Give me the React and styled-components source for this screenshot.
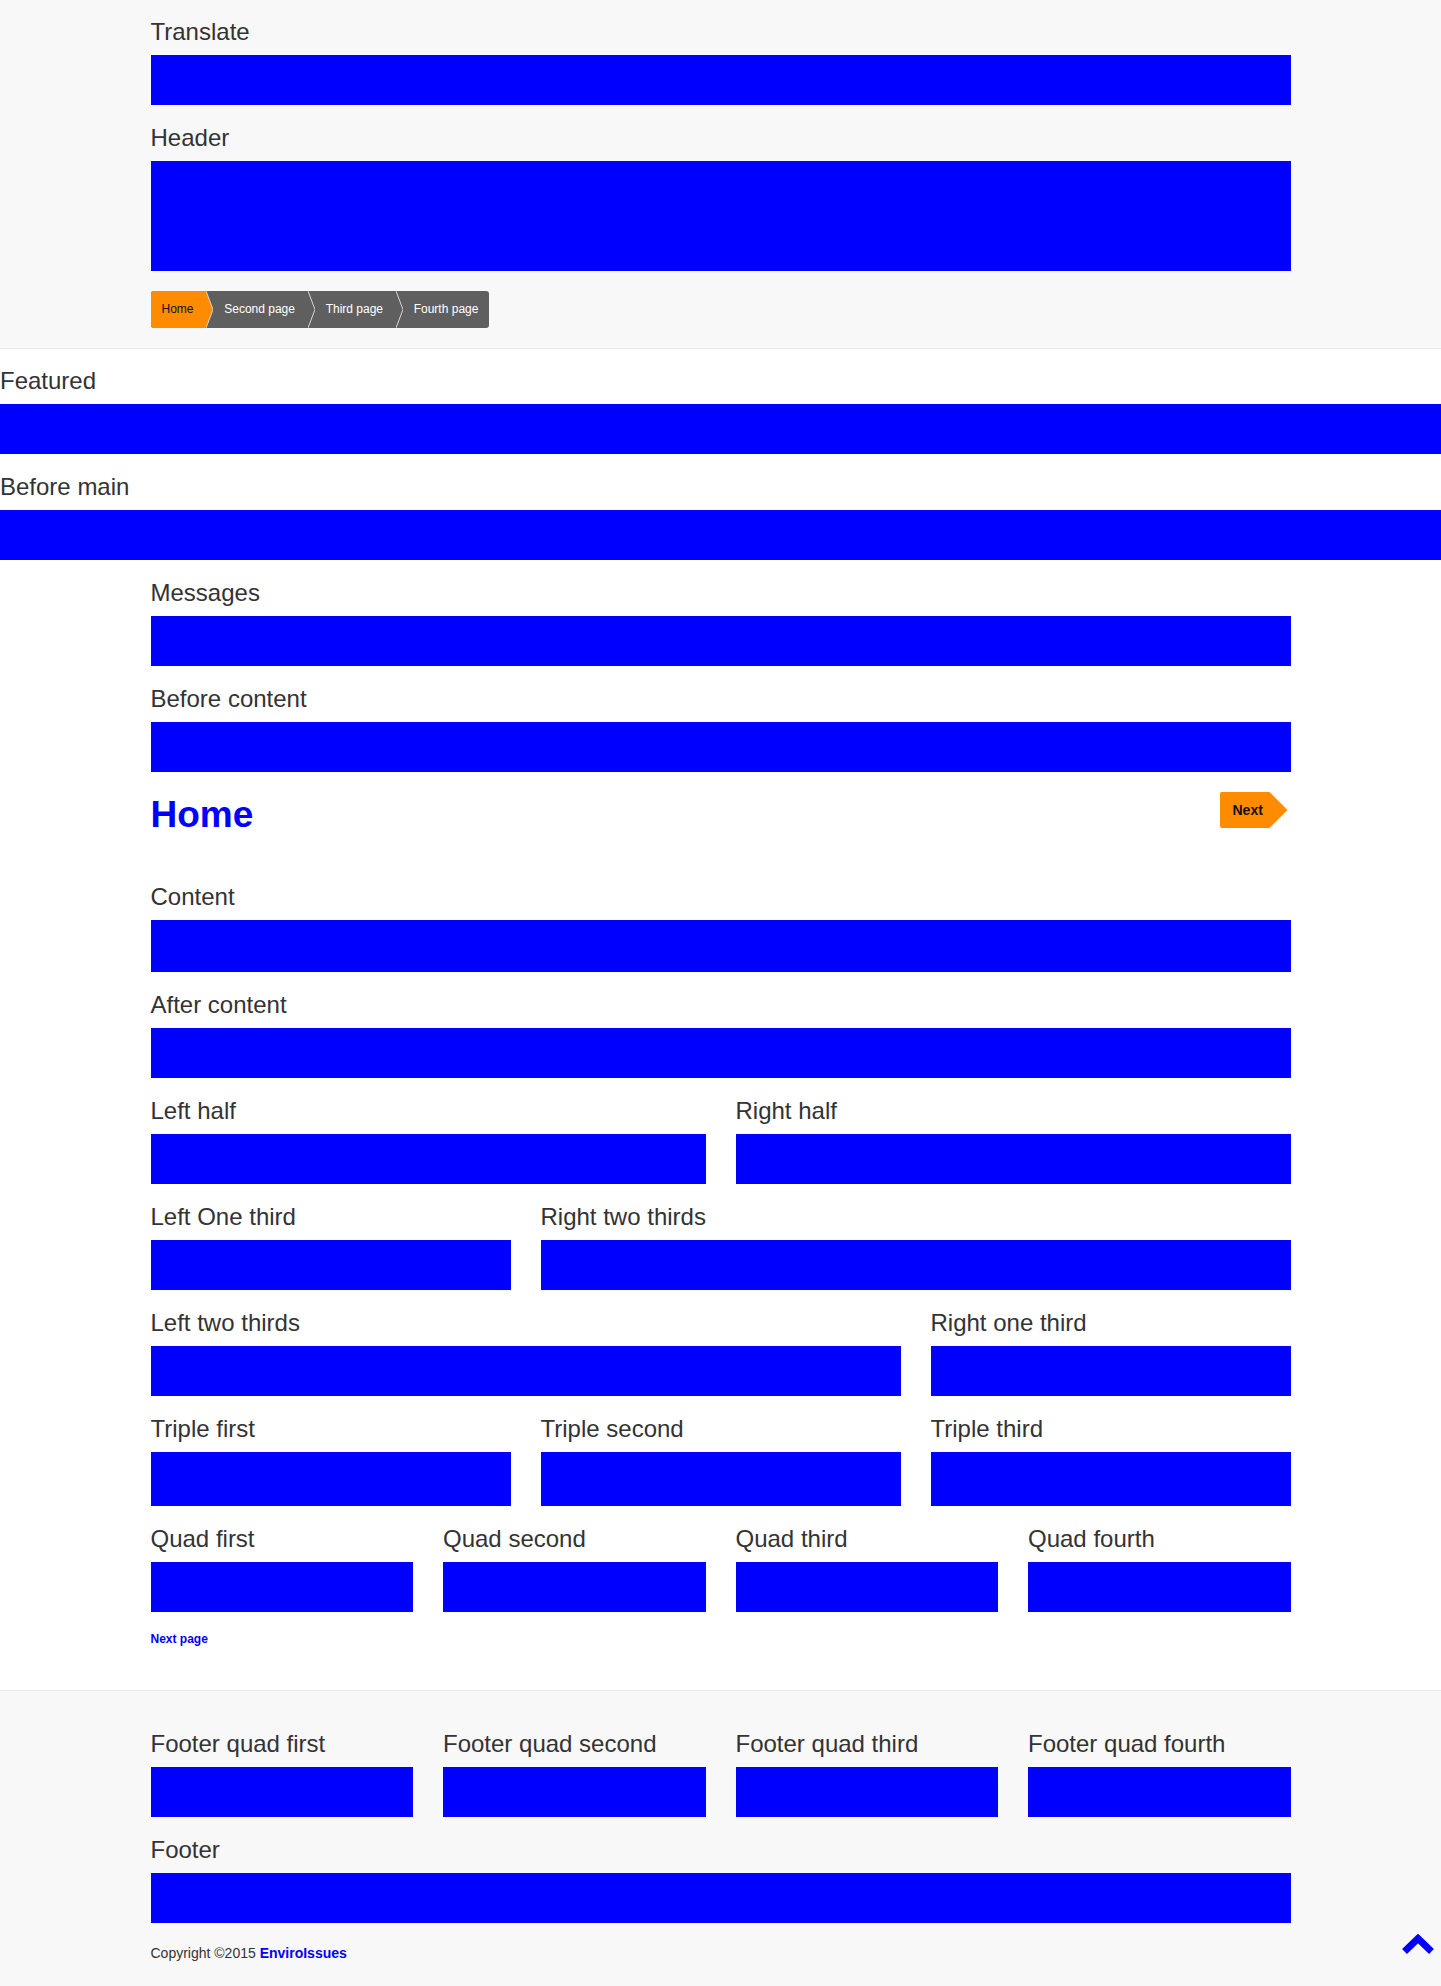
import React from 'react';
import styled, { createGlobalStyle } from 'styled-components';

const GlobalStyle = createGlobalStyle`
  html, body {
    margin: 0;
    padding: 0;
    background: #fff;
  }
  body {
    font-family: "Liberation Sans", Arial, sans-serif;
    color: #333;
  }
`;

const Container = styled.div`
  max-width: 1140px;
  margin: 0 auto;
`;

const HeaderBand = styled.header`
  background: #f8f8f8;
  border-bottom: 1px solid #e7e7e7;
  padding: 19px 0 20px;
`;

const FullBand = styled.section`
  padding-top: 19px;
`;

const Main = styled.main`
  padding-bottom: 44px;
`;

const FooterBand = styled.footer`
  background: #f8f8f8;
  border-top: 1px solid #e7e7e7;
  padding: 40px 0 23px;
`;

const Region = styled.div`
  margin-bottom: 20px;
  grid-column: span ${(p) => p.$span || 1};
`;

const Label = styled.h2`
  margin: 0 0 10px;
  font-size: 24px;
  line-height: 26px;
  font-weight: normal;
  color: #333;
`;

const Block = styled.div`
  background: #0000ff;
  height: ${(p) => p.$h || 50}px;
`;

const Columns = styled.div`
  display: grid;
  grid-template-columns: repeat(${(p) => p.$cols}, 1fr);
  column-gap: 30px;
`;

const Crumbs = styled.nav`
  display: inline-flex;
  height: 37px;
  background: #5f5f5f;
  border-radius: 3px;
  overflow: hidden;
  font-size: 12px;
  line-height: 37px;
`;

const Crumb = styled.a`
  display: block;
  padding: 0 ${(p) => (p.$last ? 10.5 : 12.7)}px 0 11px;
  background: ${(p) => (p.$active ? '#ff8c00' : 'transparent')};
  color: ${(p) => (p.$active ? '#111' : '#fff')};
  text-decoration: none;
`;

const Sep = styled.svg`
  display: block;
  flex: none;
`;

const TitleRow = styled.div`
  display: flex;
  justify-content: space-between;
  align-items: flex-start;
  margin-bottom: 47px;
`;

const Title = styled.h1`
  margin: 0;
  font-size: 37px;
  line-height: 45px;
  font-weight: bold;
  color: #0000ff;
`;

const NextButton = styled.a`
  display: block;
  width: 68px;
  height: 36px;
  margin-right: 3px;
  padding-left: 13px;
  box-sizing: border-box;
  background: #ff8c00;
  border-radius: 2px 0 0 2px;
  clip-path: polygon(0 0, 50px 0, 100% 50%, 50px 100%, 0 100%);
  color: #111;
  font-size: 14px;
  font-weight: bold;
  line-height: 36px;
  text-decoration: none;
`;

const PagerLink = styled.a`
  display: block;
  font-size: 12px;
  line-height: 14px;
  font-weight: bold;
  color: #0000ff;
  text-decoration: none;
`;

const Copyright = styled.p`
  margin: 0;
  font-size: 14px;
  line-height: 20px;
  color: #333;
  a {
    color: #0000ff;
    font-weight: bold;
    text-decoration: none;
  }
`;

const ToTop = styled.a`
  position: fixed;
  right: 7px;
  bottom: 31px;
  width: 32px;
  height: 21px;
  display: block;
`;

const Area = ({ label, h, span }) => (
  <Region $span={span}>
    <Label>{label}</Label>
    <Block $h={h} />
  </Region>
);

const Separator = ({ fill }) => (
  <Sep width="7" height="37" viewBox="0 0 7 37">
    {fill && <polygon points="0,0 7,18.5 0,37" fill={fill} />}
    <polyline points="0,0 7,18.5 0,37" fill="none" stroke="#d8d8d8" strokeWidth="1" />
  </Sep>
);

const Breadcrumb = () => (
  <Crumbs>
    <Crumb href="#" $active>Home</Crumb>
    <Separator fill="#ff8c00" />
    <Crumb href="#">Second page</Crumb>
    <Separator />
    <Crumb href="#">Third page</Crumb>
    <Separator />
    <Crumb href="#" $last>Fourth page</Crumb>
  </Crumbs>
);

const App = () => (
  <>
    <GlobalStyle />
    <HeaderBand>
      <Container>
        <Area label="Translate" />
        <Area label="Header" h={110} />
        <Breadcrumb />
      </Container>
    </HeaderBand>

    <FullBand>
      <Area label="Featured" />
      <Area label="Before main" />
    </FullBand>

    <Main>
      <Container>
        <Area label="Messages" />
        <Area label="Before content" />
        <TitleRow>
          <Title>Home</Title>
          <NextButton href="#">Next</NextButton>
        </TitleRow>
        <Area label="Content" h={52} />
        <Area label="After content" />
        <Columns $cols={2}>
          <Area label="Left half" />
          <Area label="Right half" />
        </Columns>
        <Columns $cols={3}>
          <Area label="Left One third" />
          <Area label="Right two thirds" span={2} />
        </Columns>
        <Columns $cols={3}>
          <Area label="Left two thirds" span={2} />
          <Area label="Right one third" />
        </Columns>
        <Columns $cols={3}>
          <Area label="Triple first" h={54} />
          <Area label="Triple second" h={54} />
          <Area label="Triple third" h={54} />
        </Columns>
        <Columns $cols={4}>
          <Area label="Quad first" />
          <Area label="Quad second" />
          <Area label="Quad third" />
          <Area label="Quad fourth" />
        </Columns>
        <PagerLink href="#">Next page</PagerLink>
      </Container>
    </Main>

    <FooterBand>
      <Container>
        <Columns $cols={4}>
          <Area label="Footer quad first" />
          <Area label="Footer quad second" />
          <Area label="Footer quad third" />
          <Area label="Footer quad fourth" />
        </Columns>
        <Area label="Footer" />
        <Copyright>
          Copyright ©2015 <a href="#">EnviroIssues</a>
        </Copyright>
      </Container>
    </FooterBand>

    <ToTop href="#" aria-label="Back to top">
      <svg width="32" height="21" viewBox="0 0 32 21">
        <polyline
          points="2.5,17.5 16,4.5 29.5,17.5"
          fill="none"
          stroke="#0000ff"
          strokeWidth="7"
          strokeLinejoin="miter"
        />
      </svg>
    </ToTop>
  </>
);

export default App;
